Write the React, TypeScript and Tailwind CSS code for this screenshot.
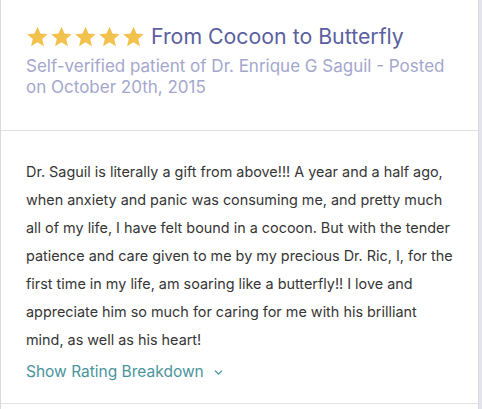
import { ChevronDown } from "lucide-react";

function Star() {
  return (
    <svg viewBox="0 0 24 24" className="h-[23px] w-[23px]" fill="#f2c14e">
      <path d="M12 1.8l3.1 7.1 7.6.7-5.8 5 1.8 7.5L12 18.1l-6.7 4 1.8-7.5-5.8-5 7.6-.7z" />
    </svg>
  );
}

export default function App() {
  return (
    <div className="flex h-[409px] w-[482px] bg-white font-['Inter',sans-serif]">
      <div className="w-[479px] border-x border-[#d9d9e0] bg-white">
        {/* Header */}
        <div className="border-b border-[#e1e1e6] px-[25px] pt-[22px] pb-[32px]">
          <div className="flex items-center">
            <div className="mr-[6px] flex gap-[1px]">
              {[0, 1, 2, 3, 4].map((i) => (
                <Star key={i} />
              ))}
            </div>
            <h2 className="text-[21.3px] leading-[28px] text-[#5b5f9f]">
              From Cocoon to Butterfly
            </h2>
          </div>
          <p className="mt-[6px] text-[17px] leading-[21px] text-[#a4a7cd]">
            Self-verified patient of Dr. Enrique G Saguil - Posted on October
            20th, 2015
          </p>
        </div>

        {/* Body */}
        <div className="border-b border-[#e1e1e6] pl-[25px] pr-[20px] pt-[27px] pb-[19px]">
          <p className="text-[14.4px] leading-[28px] text-[#363636]">
            Dr. Saguil is literally a gift from above!!! A year and a half ago,
            when anxiety and panic was consuming me, and pretty much all of my
            life, I have felt bound in a cocoon. But with the tender patience
            and care given to me by my precious Dr. Ric, I, for the first time
            in my life, am soaring like a butterfly!! I love and appreciate him
            so much for caring for me with his brilliant mind, as well as his
            heart!
          </p>
          <button
            type="button"
            className="mt-[6px] flex items-center gap-[8px] text-[15.5px] leading-[24px] text-[#4a949c]"
          >
            Show Rating Breakdown
            <ChevronDown className="h-[13px] w-[13px]" strokeWidth={2.5} />
          </button>
        </div>
      </div>
      <div className="flex-1 bg-[#e4e4ec]" />
    </div>
  );
}
